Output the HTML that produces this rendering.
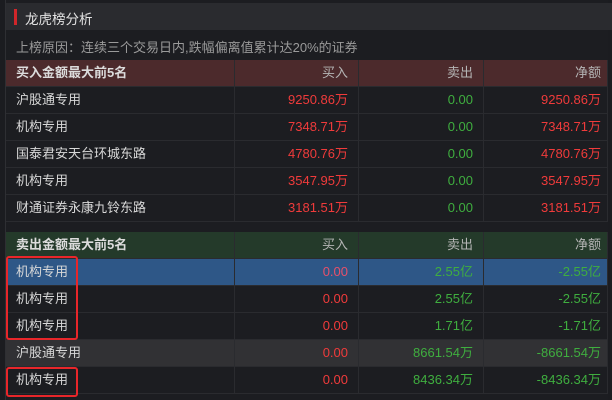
<html><head><style>
body{margin:0;width:612px;height:400px;background:#1b1c20;font-family:"Liberation Sans","Noto Sans CJK SC",sans-serif;overflow:hidden;position:relative}
.p{position:absolute;left:5px;top:0;width:602px;height:400px;background:#1c1d21;border-left:1px solid #2e2f33}
.title{position:absolute;left:0;top:3px;width:607px;height:27px;background:#2a2b2f}
.title .bar{position:absolute;left:8px;top:6px;width:3px;height:16px;background:#d0262a}
.title span{position:absolute;left:19px;top:5px;font-size:13.5px;color:#e2e2e2}
.reason{position:absolute;left:10px;top:37px;font-size:13px;color:#9a9a9a}
.row{position:absolute;left:0;width:602px;height:27px;border-bottom:1px solid #2a2b2f;box-sizing:border-box;font-size:13px}
.row div{position:absolute;top:0;height:26px;line-height:26px;box-sizing:border-box}
.c0{left:10px;color:#d8d8d8}
.c1{left:228px;width:124px;text-align:right;padding-right:10px;border-left:1px solid #2a2b2f}
.c2{left:352px;width:125px;text-align:right;padding-right:10px;border-left:1px solid #2a2b2f}
.c3{left:477px;width:125px;text-align:right;padding-right:6px;border-left:1px solid #2a2b2f;border-right:1px solid #2a2b2f}
.h div{color:#b5b5b5}.h .c0{font-weight:bold;color:#dcdcdc}
.r{color:#f03b3b}.g{color:#3fae3f}
.box{position:absolute;border:2px solid #e8262a;border-radius:3px}
</style></head><body>
<div class="p">
<div class="title"><div class="bar"></div><span>龙虎榜分析</span></div>
<div class="reason">上榜原因：连续三个交易日内,跌幅偏离值累计达20%的证券</div>
<div class="row h" style="top:60px;background:#4c2a2c"><div class="c0">买入金额最大前5名</div><div class="c1">买入</div><div class="c2">卖出</div><div class="c3">净额</div></div>
<div class="row" style="top:87px"><div class="c0">沪股通专用</div><div class="c1 r">9250.86万</div><div class="c2 g">0.00</div><div class="c3 r">9250.86万</div></div>
<div class="row" style="top:114px"><div class="c0">机构专用</div><div class="c1 r">7348.71万</div><div class="c2 g">0.00</div><div class="c3 r">7348.71万</div></div>
<div class="row" style="top:141px"><div class="c0">国泰君安天台环城东路</div><div class="c1 r">4780.76万</div><div class="c2 g">0.00</div><div class="c3 r">4780.76万</div></div>
<div class="row" style="top:168px"><div class="c0">机构专用</div><div class="c1 r">3547.95万</div><div class="c2 g">0.00</div><div class="c3 r">3547.95万</div></div>
<div class="row" style="top:195px"><div class="c0">财通证券永康九铃东路</div><div class="c1 r">3181.51万</div><div class="c2 g">0.00</div><div class="c3 r">3181.51万</div></div>
<div class="row h" style="top:232px;background:#243a2a"><div class="c0">卖出金额最大前5名</div><div class="c1">买入</div><div class="c2">卖出</div><div class="c3">净额</div></div>
<div class="row" style="top:259px;background:#2e5787"><div class="c0">机构专用</div><div class="c1" style="color:#e8506a">0.00</div><div class="c2 g">2.55亿</div><div class="c3 g">-2.55亿</div></div>
<div class="row" style="top:286px"><div class="c0">机构专用</div><div class="c1 r">0.00</div><div class="c2 g">2.55亿</div><div class="c3 g">-2.55亿</div></div>
<div class="row" style="top:313px"><div class="c0">机构专用</div><div class="c1 r">0.00</div><div class="c2 g">1.71亿</div><div class="c3 g">-1.71亿</div></div>
<div class="row" style="top:340px;background:#313134"><div class="c0">沪股通专用</div><div class="c1 r">0.00</div><div class="c2 g">8661.54万</div><div class="c3 g">-8661.54万</div></div>
<div class="row" style="top:367px"><div class="c0">机构专用</div><div class="c1 r">0.00</div><div class="c2 g">8436.34万</div><div class="c3 g">-8436.34万</div></div>
</div>
<div class="box" style="left:6px;top:256px;width:68px;height:80px"></div>
<div class="box" style="left:6px;top:367px;width:68px;height:26px"></div>
</body></html>
